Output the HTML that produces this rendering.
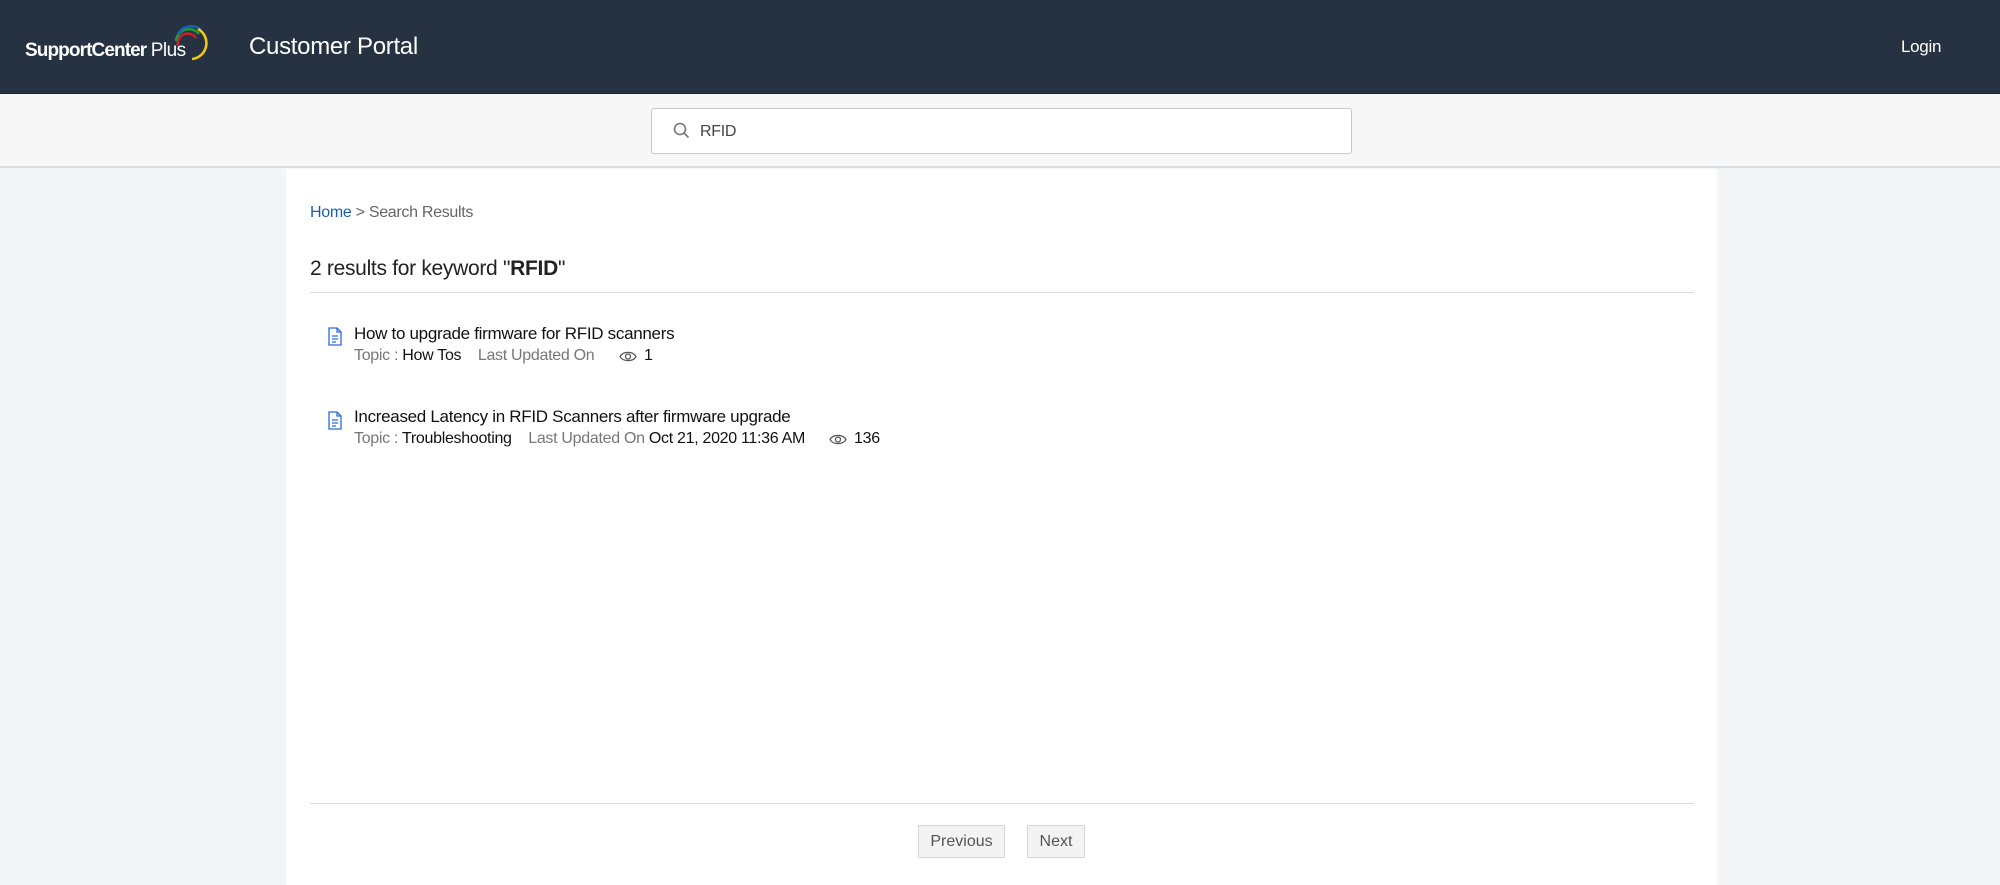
<!DOCTYPE html>
<html><head><meta charset="utf-8"><style>
*{margin:0;padding:0;box-sizing:border-box}
body{width:2000px;height:885px;overflow:hidden;background:#f4f5f7;font-family:"Liberation Sans",sans-serif;position:relative;letter-spacing:-0.3px}
.hdr{position:absolute;left:0;top:0;width:2000px;height:94px;background:#263241;border-bottom:1px solid #1a2230}
.abs{position:absolute;white-space:nowrap}
.sb{position:absolute;left:0;top:95px;width:2000px;height:73px;background:#f7f7f7;border-bottom:2px solid #dedede}
.search{position:absolute;left:651px;top:108px;width:701px;height:46px;background:#fff;border:1px solid #c8c8c8;border-radius:3px}
.panel{position:absolute;left:286px;top:169px;width:1431px;height:716px;background:#fff}
.gray{color:#666}
.btn{position:absolute;top:825px;height:33px;background:#f3f3f3;border:1px solid #d6d6d6;color:#555;font-size:16px;line-height:31px;text-align:center;letter-spacing:0}
</style></head><body>
<div class="hdr">
 <div class="abs" style="left:25px;top:40px;color:#fff;font-size:19px;font-weight:bold;letter-spacing:-0.9px">SupportCenter <span style="font-weight:normal;letter-spacing:-0.5px">Plus</span></div>
 <svg class="abs" style="left:170px;top:24px" width="38" height="38" viewBox="0 0 38 38" fill="none">
  <path d="M8 22 A10 10 0 0 1 26 14" stroke="#c8202a" stroke-width="2.6"/>
  <path d="M6 17 A13 13 0 0 1 29 10" stroke="#1d9a3a" stroke-width="2.6"/>
  <path d="M8 10 A15 15 0 0 1 31 6" stroke="#1f5fb0" stroke-width="2.6"/>
  <path d="M28 5 A16 16 0 0 1 22 35" stroke="#f2c811" stroke-width="2.6"/>
 </svg>
 <div class="abs" style="left:249px;top:33px;color:#fff;font-size:24px">Customer Portal</div>
 <div class="abs" style="left:1901px;top:37px;color:#fff;font-size:17px">Login</div>
</div>
<div class="sb"></div>
<div class="search">
 <svg class="abs" style="left:21px;top:13px" width="17" height="17" viewBox="0 0 17 17" fill="none" stroke="#777" stroke-width="1.6"><circle cx="7" cy="7" r="5.5"/><path d="M11 11l4.5 4.5"/></svg>
 <div class="abs" style="left:48px;top:14px;font-size:16px;color:#444">RFID</div>
</div>
<div class="panel"></div>
<div class="abs" style="left:310px;top:204px;font-size:16px"><span style="color:#1a5fb4">Home</span> <span class="gray">&gt; Search Results</span></div>
<div class="abs" style="left:310px;top:257px;font-size:21px;color:#222">2 results for keyword "<b>RFID</b>"</div>
<div class="abs" style="left:310px;top:292px;width:1384px;height:1px;background:#ddd"></div>

<svg class="abs" style="left:328px;top:327px" width="14" height="19" viewBox="0 0 14 19" fill="none" stroke="#2a6bd8" stroke-width="1.3"><path d="M1 1h8l4 4v13H1z"/><path d="M9 1v4h4M4 9h6M4 12h6M4 15h4"/></svg>
<div class="abs" style="left:354px;top:324px;font-size:17px;color:#111">How to upgrade firmware for RFID scanners</div>
<div class="abs" style="left:354px;top:347px;font-size:16px;color:#777">Topic : <span style="color:#111">How Tos</span>&nbsp;&nbsp;&nbsp;&nbsp;Last Updated On</div>
<svg class="abs" style="left:619px;top:350px" width="18" height="13" viewBox="0 0 18 13" fill="none" stroke="#555" stroke-width="1.3"><path d="M1 6.5C4 1 14 1 17 6.5 14 12 4 12 1 6.5z"/><circle cx="9" cy="6.5" r="2.5"/></svg>
<div class="abs" style="left:644px;top:347px;font-size:16px;color:#111">1</div>

<svg class="abs" style="left:328px;top:411px" width="14" height="19" viewBox="0 0 14 19" fill="none" stroke="#2a6bd8" stroke-width="1.3"><path d="M1 1h8l4 4v13H1z"/><path d="M9 1v4h4M4 9h6M4 12h6M4 15h4"/></svg>
<div class="abs" style="left:354px;top:407px;font-size:17px;color:#111">Increased Latency in RFID Scanners after firmware upgrade</div>
<div class="abs" style="left:354px;top:430px;font-size:16px;color:#777">Topic : <span style="color:#111">Troubleshooting</span>&nbsp;&nbsp;&nbsp;&nbsp;Last Updated On <span style="color:#111">Oct 21, 2020 11:36 AM</span></div>
<svg class="abs" style="left:829px;top:433px" width="18" height="13" viewBox="0 0 18 13" fill="none" stroke="#555" stroke-width="1.3"><path d="M1 6.5C4 1 14 1 17 6.5 14 12 4 12 1 6.5z"/><circle cx="9" cy="6.5" r="2.5"/></svg>
<div class="abs" style="left:854px;top:430px;font-size:16px;color:#111">136</div>

<div class="abs" style="left:310px;top:803px;width:1384px;height:1px;background:#ddd"></div>
<div class="btn" style="left:918px;width:87px">Previous</div>
<div class="btn" style="left:1027px;width:58px">Next</div>
</body></html>
